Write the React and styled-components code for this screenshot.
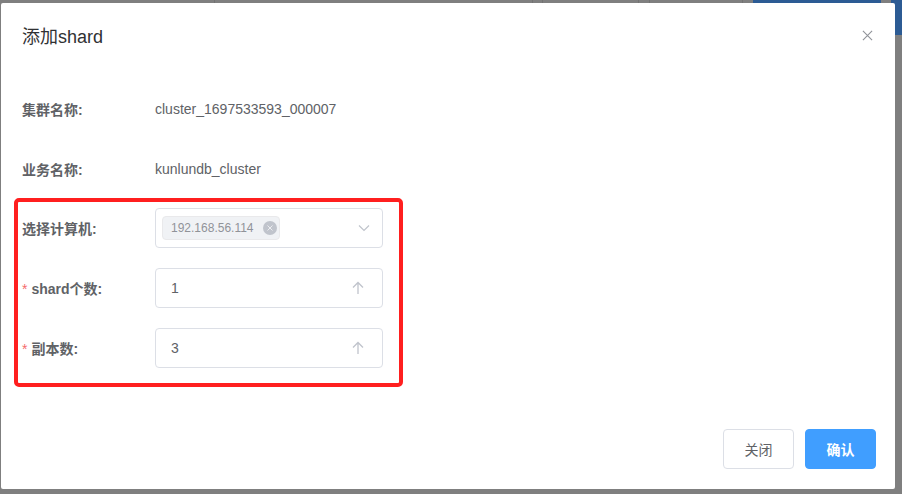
import React from 'react';
import styled, { createGlobalStyle } from 'styled-components';

const GlobalStyle = createGlobalStyle`
  html, body {
    margin: 0;
    padding: 0;
    width: 902px;
    height: 494px;
    overflow: hidden;
    background: #7f7f7f;
  }
  * { box-sizing: border-box; }
`;

const Screen = styled.div`
  position: relative;
  width: 902px;
  height: 494px;
  background: #7f7f7f;
  font-family: "Liberation Sans", "Noto Sans CJK SC", Arial, sans-serif;
`;

const PageHeader = styled.div`
  display: flex;
  height: 35px;
`;

const HeaderCell = styled.div`
  width: ${p => p.$w}px;
  height: 100%;
  background: ${p => (p.$blue ? '#2c5b94' : '#7f7f7f')};
  border-right: 1px solid ${p => (p.$line ? '#727272' : 'transparent')};
  flex: ${p => (p.$grow ? 1 : 'none')};
`;

const Overlay = styled.div`
  position: absolute;
  inset: 0;
  display: flex;
  padding: 3px 7px 5px 1px;
`;

const Dialog = styled.div`
  flex: 1;
  display: flex;
  flex-direction: column;
  background: #fff;
  border-radius: 2px;
`;

const DialogHeader = styled.div`
  display: flex;
  align-items: center;
  justify-content: space-between;
  padding: 22px 22px 10px 21px;
`;

const Title = styled.span`
  font-size: 18px;
  line-height: 24px;
  color: #303133;
`;

const CloseBtn = styled.button`
  display: flex;
  align-items: center;
  justify-content: center;
  width: 12px;
  height: 12px;
  padding: 0;
  border: none;
  background: none;
  cursor: pointer;
  margin-top: -4px;
`;

const Body = styled.div`
  display: flex;
  flex-direction: column;
  padding: 30px 21px 0;
`;

const Row = styled.div`
  display: flex;
  align-items: center;
  height: 40px;
  margin-bottom: ${p => p.$mb ?? 20}px;
  &:last-child { margin-bottom: 0; }
`;

const Label = styled.label`
  width: 133px;
  flex: none;
  font-size: 14px;
  font-weight: 700;
  color: #606266;
  font-family: "Liberation Sans", "Noto Sans CJK SC", sans-serif;
`;

const Star = styled.span`
  color: #f56c6c;
  font-weight: 400;
  margin-right: 4px;
`;

const Value = styled.span`
  font-size: 14px;
  color: #606266;
`;

const Highlight = styled.div`
  display: flex;
  flex-direction: column;
  width: 389px;
  margin-left: -8px;
  padding: 6px 16px 15px 4px;
  border: 4px solid #ff1f1f;
  border-radius: 5px;
`;

const Field = styled.div`
  display: flex;
  align-items: center;
  width: 228px;
  height: 40px;
  border: 1px solid #dcdfe6;
  border-radius: 4px;
  background: #fff;
  padding: ${p => (p.$select ? '0 12px 0 6px' : '0 18px 0 15px')};
  justify-content: space-between;
`;

const Tag = styled.span`
  display: inline-flex;
  align-items: center;
  height: 24px;
  padding: 0 2px 0 8px;
  background: #f0f2f5;
  border: 1px solid #e9e9eb;
  border-radius: 4px;
  font-size: 12px;
  color: #909399;
  gap: 9px;
`;

const TagClose = styled.span`
  display: inline-flex;
  align-items: center;
  justify-content: center;
  width: 14px;
  height: 14px;
  border-radius: 50%;
  background: #c0c4cc;
`;

const InputText = styled.span`
  font-size: 14px;
  color: #606266;
`;

const Footer = styled.div`
  margin-top: auto;
  display: flex;
  justify-content: flex-end;
  gap: 11px;
  padding: 0 19px 20px;
`;

const Button = styled.button`
  width: 71px;
  height: 40px;
  border-radius: 4px;
  font-size: 14px;
  font-family: "Liberation Sans", "Noto Sans CJK SC", sans-serif;
  cursor: pointer;
  border: 1px solid ${p => (p.$primary ? '#409eff' : '#dcdfe6')};
  background: ${p => (p.$primary ? '#409eff' : '#fff')};
  color: ${p => (p.$primary ? '#fff' : '#606266')};
  font-weight: ${p => (p.$primary ? 700 : 400)};
`;

const XIcon = ({ size = 12, color = '#909399', width = 1.2 }) => (
  <svg width={size} height={size} viewBox="0 0 12 12">
    <path d="M1 1 L11 11 M11 1 L1 11" stroke={color} strokeWidth={width} fill="none" />
  </svg>
);

const ChevronDown = () => (
  <svg width="12" height="8" viewBox="0 0 12 8">
    <polyline points="1,1.5 6,6.5 11,1.5" stroke="#c0c4cc" strokeWidth="1.2" fill="none" />
  </svg>
);

const ArrowUp = () => (
  <svg width="12" height="14" viewBox="0 0 12 14">
    <path d="M6 1.5 L6 13 M1 6.5 L6 1.5 L11 6.5" stroke="#c0c4cc" strokeWidth="1.3" fill="none" />
  </svg>
);

export default function App() {
  return (
    <Screen>
      <GlobalStyle />
      <PageHeader>
        <HeaderCell $w={215} $line />
        <HeaderCell $w={318} $line />
        <HeaderCell $w={10} $line />
        <HeaderCell $w={96} $line />
        <HeaderCell $w={11} $line />
        <HeaderCell $w={93} $line />
        <HeaderCell $w={10} />
        <HeaderCell $w={128} $blue />
        <HeaderCell $w={10} />
        <HeaderCell $grow $blue />
      </PageHeader>
      <Overlay>
        <Dialog>
          <DialogHeader>
            <Title>添加shard</Title>
            <CloseBtn aria-label="close"><XIcon size={11} /></CloseBtn>
          </DialogHeader>
          <Body>
            <Row>
              <Label>集群名称:</Label>
              <Value>cluster_1697533593_000007</Value>
            </Row>
            <Row $mb={9}>
              <Label>业务名称:</Label>
              <Value>kunlundb_cluster</Value>
            </Row>
            <Highlight>
              <Row>
                <Label>选择计算机:</Label>
                <Field $select>
                  <Tag>
                    192.168.56.114
                    <TagClose><XIcon size={6} color="#fff" width={1.4} /></TagClose>
                  </Tag>
                  <ChevronDown />
                </Field>
              </Row>
              <Row>
                <Label><Star>*</Star>shard个数:</Label>
                <Field>
                  <InputText>1</InputText>
                  <ArrowUp />
                </Field>
              </Row>
              <Row>
                <Label><Star>*</Star>副本数:</Label>
                <Field>
                  <InputText>3</InputText>
                  <ArrowUp />
                </Field>
              </Row>
            </Highlight>
          </Body>
          <Footer>
            <Button>关闭</Button>
            <Button $primary>确认</Button>
          </Footer>
        </Dialog>
      </Overlay>
    </Screen>
  );
}
